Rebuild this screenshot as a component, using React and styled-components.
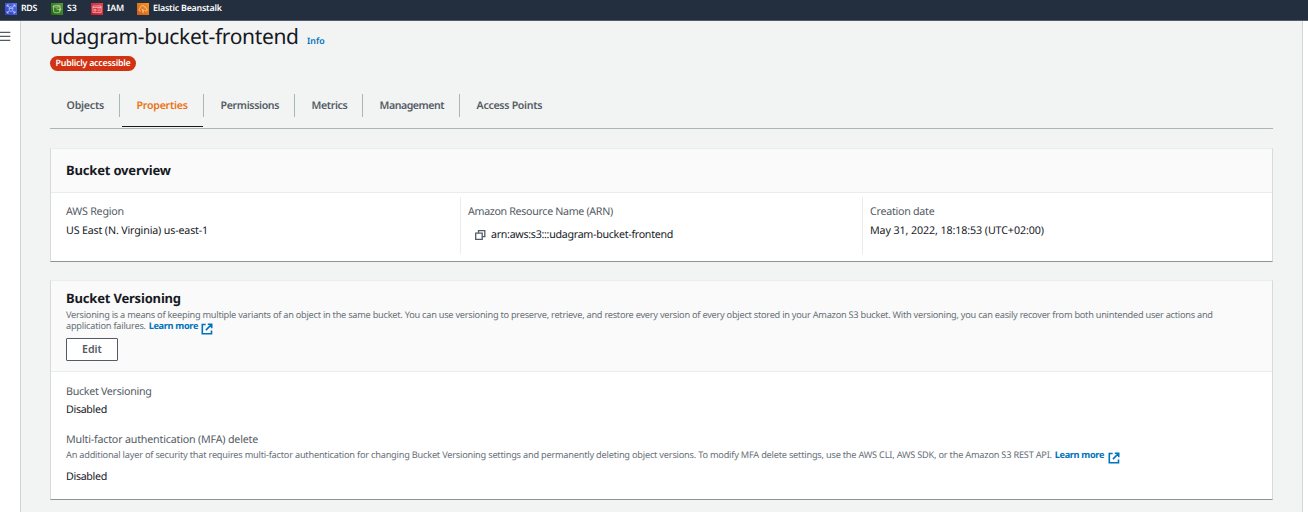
import React from "react";
import styled, { createGlobalStyle, css } from "styled-components";

const GlobalStyle = createGlobalStyle`
  * { box-sizing: border-box; }
  body {
    margin: 0;
    background: #f2f3f3;
    color: #16191f;
    font-family: "Noto Sans", "Open Sans", sans-serif;
    text-rendering: geometricPrecision;
    overflow: hidden;
  }
  svg { display: block; flex: none; }
`;

const tracked = css`
  letter-spacing: ${({ $track = 0 }) => $track}px;
  white-space: nowrap;
`;

const Page = styled.div`
  display: flex;
  flex-direction: column;
  height: 512px;
`;

const TopBar = styled.header`
  display: flex;
  gap: 14px;
  height: 21px;
  padding: 3px 5px 0;
  background: #232f3e;
  border-bottom: 1px solid #545b64;
`;

const Shortcut = styled.a`
  display: flex;
  gap: 4px;
  width: ${({ $width }) => $width}px;
  height: 12px;
  color: #fff;
`;

const ShortcutName = styled.span`
  font-size: 8.8px;
  font-weight: 600;
  line-height: 10.5px;
  ${tracked}
`;

const Shell = styled.div`
  display: flex;
  flex: 1;
  min-height: 0;
`;

const SideRail = styled.aside`
  width: 21px;
  padding-top: 10px;
  background: #fff;
  border-right: 1px solid #d0d6d6;
`;

const RightRail = styled.aside`
  width: 6px;
  background: #fff;
  border-left: 1px solid #d0d6d6;
`;

const Main = styled.main`
  flex: 1;
  min-width: 0;
  padding: 2px 29px 0;
`;

const TitleRow = styled.div`
  display: flex;
  align-items: baseline;
  gap: 8.5px;
  height: 28px;
`;

const Title = styled.h1`
  margin: 0;
  font-size: 21px;
  font-weight: 400;
  line-height: 28px;
  ${tracked}
`;

const Info = styled.a`
  color: #0073bb;
  font-size: 8.8px;
  font-weight: 600;
  ${tracked}
`;

const Badge = styled.span`
  display: block;
  width: 86px;
  height: 15px;
  margin-top: 5px;
  border-radius: 8px;
  background: #d13212;
  color: #fff;
  font-size: 8.9px;
  font-weight: 600;
  line-height: 14px;
  text-align: center;
  ${tracked}
`;

const Tabs = styled.nav`
  display: flex;
  height: 43px;
  margin-top: 15px;
  border-bottom: 1px solid #aab7b8;
`;

const Tab = styled.div`
  display: flex;
  width: ${({ $width }) => $width}px;

  &:not(:last-child)::after {
    content: "";
    width: 1px;
    height: 23px;
    margin-top: 8px;
    background: #aab7b8;
  }
`;

const TabButton = styled.a`
  flex: 1;
  height: 41px;
  margin-left: 2px;
  padding-left: 14.6px;
  border-bottom: 1px solid ${({ $active }) => ($active ? "#16191f" : "transparent")};
  color: ${({ $active }) => ($active ? "#ec7211" : "#545b64")};
  font-size: 10.6px;
  font-weight: 650;
  line-height: 40px;
  ${tracked}
`;

const Card = styled.section`
  margin-top: ${({ $gap }) => $gap}px;
  background: #fff;
  border: 1px solid #d5dbdb;
  border-top-color: #eaeded;
  border-bottom-color: #879596;
`;

const CardHeader = styled.div`
  padding: ${({ $pad }) => $pad};
  background: #fafafa;
  border-bottom: 1px solid #eaeded;
`;

const CardTitle = styled.h2`
  margin: 0;
  font-size: 13px;
  font-weight: 670;
  line-height: 18px;
  ${tracked}
`;

const Description = styled.p`
  margin: ${({ $top }) => $top}px 0 0;
  color: #687078;
  font-size: 9.2px;
  line-height: 11px;
`;

const DescriptionLine = styled.span`
  display: flex;
  height: 11px;
  ${tracked}
`;

const LearnMore = styled.a`
  display: flex;
  gap: ${({ $gap }) => $gap}px;
  margin-left: 2.8px;
  color: #0073bb;
  font-weight: 700;
  ${tracked}

  svg { margin-top: 2.5px; }
`;

const EditButton = styled.button`
  display: block;
  width: 52px;
  height: 23px;
  margin: 7px 0 0;
  padding: 0;
  background: #fff;
  border: 1px solid #545b64;
  border-radius: 1px;
  color: #545b64;
  font: 650 10.6px/19px "Noto Sans", sans-serif;
`;

const Columns = styled.div`
  display: grid;
  grid-template-columns: 409px 402px 1fr;
  padding: 4px 0 7px;
`;

const Column = styled.div`
  height: 57px;
  padding: 6px 0 0 15px;

  & + & {
    padding-left: 7px;
    border-left: 1px solid #eaeded;
  }
`;

const Fields = styled.div`
  padding: 11px 15px 13px;
`;

const Label = styled.div`
  margin-top: ${({ $top = 0 }) => $top}px;
  color: #545b64;
  font-size: 10.7px;
  line-height: 18px;
  ${tracked}
`;

const Value = styled.div`
  display: flex;
  align-items: center;
  gap: 5px;
  margin-top: ${({ $top = 0 }) => $top}px;
  padding-left: ${({ $indent = 0 }) => $indent}px;
  font-size: 10.7px;
  line-height: 18px;
  ${tracked}
`;

const MenuIcon = () => (
  <svg width="11" height="11" viewBox="0 0 11 11" stroke="#545b64" strokeWidth="1.2">
    <path d="M0 1.3h10.3M0 5.3h10.3M0 9.3h10.3" />
  </svg>
);

const ExternalIcon = () => (
  <svg width="12" height="12" viewBox="0 0 12 12" fill="none" stroke="#0073bb" strokeWidth="1.6">
    <path d="M4.7 1.5H1.3V10.7H10.5V7.4M6.8 1.3H10.7V5.3M10.5 1.5L4.9 7.1" />
  </svg>
);

const CopyIcon = () => (
  <svg width="11" height="10" viewBox="0 0 11 10" fill="none" stroke="#545b64" strokeWidth="1.3">
    <path d="M0.7 3.2H7.2V9.3H0.7zM3.5 3V0.7H9.8V6.7H7.4" />
  </svg>
);

const ServiceIcon = ({ fill, light, children }) => (
  <svg width="12" height="12" viewBox="0 0 12 12" fill="none" stroke="#fff" strokeOpacity="0.75" strokeWidth="0.7">
    <defs>
      <linearGradient id={"g" + fill.slice(1)} x1="0" y1="1" x2="1" y2="0">
        <stop offset="0" stopColor={fill} />
        <stop offset="1" stopColor={light} />
      </linearGradient>
    </defs>
    <rect width="12" height="12" fill={`url(#g${fill.slice(1)})`} stroke="none" />
    {children}
  </svg>
);

const shortcuts = [
  {
    name: "RDS", width: 32, track: -0.3, fill: "#2e3fc4", light: "#5572f0",
    art: <path d="M2 4V2H4M8 2H10V4M10 8V10H8M4 10H2V8M2.2 2.2L4 4M9.8 2.2L8 4M9.8 9.8L8 8M2.2 9.8L4 8M4.2 4.5C4.2 3.7 7.8 3.7 7.8 4.5V7.6C7.8 8.4 4.2 8.4 4.2 7.6zM4.2 5C4.2 5.7 7.8 5.7 7.8 5" />,
  },
  {
    name: "S3", width: 26, track: -0.1, fill: "#1b660f", light: "#5a9e33",
    art: <path d="M2.2 3.2C2.2 2.2 9.2 2.2 9.2 3.2L8.6 9.2C8.4 10 3 10 2.8 9.2zM2.2 3.2C2.2 4.4 9.2 4.4 9.2 3.2M5.4 5.9L9.8 7.1V5.8L9 5.3" />,
  },
  {
    name: "IAM", width: 32, track: -0.1, fill: "#c0172c", light: "#f0444c",
    art: <path d="M1.9 3H10.1V9.6H1.9zM1.9 4.5H10.1M3.3 8.1V6.3H5V8.1zM6.4 6H8.9M6.4 7.8H8.9" />,
  },
  {
    name: "Elastic Beanstalk", width: 85, track: -0.2, fill: "#d05c12", light: "#f79420",
    art: <path d="M4 8H3.2C1.6 8 1.4 5.6 3.1 5.4C3 2.3 7 1.7 7.7 4.2C8.6 3.9 9.1 4.7 9 5.4C10.6 5.7 10.4 8 8.9 8H8M6 10.3V6M6 7.4L4.4 6M6 8.7L7.6 7.2" />,
  },
];

const tabs = [
  { name: "Objects", width: 70, track: -0.24 },
  { name: "Properties", width: 84, track: -0.25, active: true },
  { name: "Permissions", width: 91, track: -0.36 },
  { name: "Metrics", width: 68, track: -0.4 },
  { name: "Management", width: 97, track: -0.47 },
  { name: "Access Points", width: 100, track: -0.3 },
];

export default function App() {
  return (
    <Page>
      <GlobalStyle />
      <TopBar>
        {shortcuts.map((s) => (
          <Shortcut key={s.name} $width={s.width}>
            <ServiceIcon fill={s.fill} light={s.light}>{s.art}</ServiceIcon>
            <ShortcutName $track={s.track}>{s.name}</ShortcutName>
          </Shortcut>
        ))}
      </TopBar>
      <Shell>
        <SideRail><MenuIcon /></SideRail>
        <Main>
          <TitleRow>
            <Title $track={-0.36}>udagram-bucket-frontend</Title>
            <Info>Info</Info>
          </TitleRow>
          <Badge $track={-0.25}>Publicly accessible</Badge>
          <Tabs>
            {tabs.map((t) => (
              <Tab key={t.name} $width={t.width}>
                <TabButton $active={t.active} $track={t.track}>{t.name}</TabButton>
              </Tab>
            ))}
          </Tabs>

          <Card $gap={19}>
            <CardHeader $pad="12px 15px 13px">
              <CardTitle $track={-0.18}>Bucket overview</CardTitle>
            </CardHeader>
            <Columns>
              <Column>
                <Label $track={-0.21}>AWS Region</Label>
                <Value $top={1} $track={-0.16}>US East (N. Virginia) us-east-1</Value>
              </Column>
              <Column>
                <Label $track={-0.34}>Amazon Resource Name (ARN)</Label>
                <Value $top={5} $indent={7} $track={-0.3}>
                  <CopyIcon />
                  arn:aws:s3:::udagram-bucket-frontend
                </Value>
              </Column>
              <Column>
                <Label $track={-0.27}>Creation date</Label>
                <Value $top={1} $track={-0.1}>May 31, 2022, 18:18:53 (UTC+02:00)</Value>
              </Column>
            </Columns>
          </Card>

          <Card $gap={18}>
            <CardHeader $pad="8px 15px 10px">
              <CardTitle $track={-0.18}>Bucket Versioning</CardTitle>
              <Description $top={2}>
                <DescriptionLine $track={-0.246}>
                  Versioning is a means of keeping multiple variants of an object in the same bucket. You can use versioning to preserve, retrieve, and restore every version of every object stored in your Amazon S3 bucket. With versioning, you can easily recover from both unintended user actions and
                </DescriptionLine>
                <DescriptionLine $track={-0.22}>
                  application failures.
                  <LearnMore $gap={3} $track={-0.33}>Learn more <ExternalIcon /></LearnMore>
                </DescriptionLine>
              </Description>
              <EditButton>Edit</EditButton>
            </CardHeader>
            <Fields>
              <Label $track={-0.3}>Bucket Versioning</Label>
              <Value $track={-0.33}>Disabled</Value>
              <Label $top={12} $track={-0.19}>Multi-factor authentication (MFA) delete</Label>
              <Description $top={0}>
                <DescriptionLine $track={-0.213}>
                  An additional layer of security that requires multi-factor authentication for changing Bucket Versioning settings and permanently deleting object versions. To modify MFA delete settings, use the AWS CLI, AWS SDK, or the Amazon S3 REST API.
                  <LearnMore $gap={4} $track={-0.33}>Learn more <ExternalIcon /></LearnMore>
                </DescriptionLine>
              </Description>
              <Value $top={8} $track={-0.33}>Disabled</Value>
            </Fields>
          </Card>
        </Main>
        <RightRail />
      </Shell>
    </Page>
  );
}
